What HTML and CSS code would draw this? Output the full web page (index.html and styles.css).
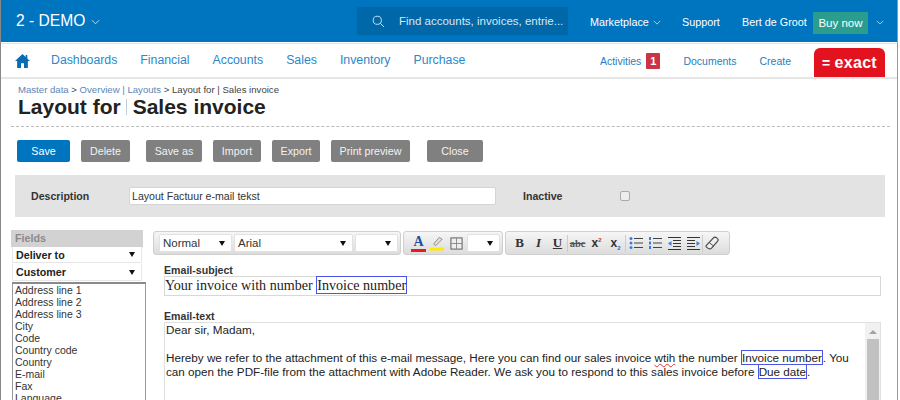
FILE: index.html
```html
<!DOCTYPE html>
<html lang="en">
<head>
<meta charset="utf-8">
<title>Layout for Sales invoice</title>
<link rel="stylesheet" href="styles.css">
</head>
<body>
<div class="app">
  <header class="topbar">
    <div class="org">2 - DEMO <svg class="chev chev-lg" viewBox="0 0 10 6"><path d="M1 1l4 4 4-4"/></svg></div>
    <div class="search">
      <svg class="search-icon" viewBox="0 0 16 16"><circle cx="6.5" cy="6.5" r="5"/><path d="M10.2 10.2l4.6 4.6"/></svg>
      <span>Find accounts, invoices, entrie...</span>
    </div>
    <nav class="top-links">
      <span class="tl-market">Marketplace <svg class="chev" viewBox="0 0 10 6"><path d="M1 1l4 4 4-4"/></svg></span>
      <span class="tl-support">Support</span>
      <span class="tl-user">Bert de Groot</span>
      <span class="buy">Buy now</span>
      <svg class="chev tl-end" viewBox="0 0 10 6"><path d="M1 1l4 4 4-4"/></svg>
    </nav>
  </header>

  <div class="navbar">
    <svg class="home" viewBox="0 0 14 13"><path d="M7 0L0 6.6h2V13h3.6V8.6h2.8V13H12V6.6h2L11.500 4.200V1H10v1.800z"/></svg>
    <nav class="mainnav">
      <a>Dashboards</a><a>Financial</a><a>Accounts</a><a>Sales</a><a>Inventory</a><a>Purchase</a>
    </nav>
    <div class="subnav">
      <a class="activities">Activities <b class="badge">1</b></a>
      <a>Documents</a>
      <a>Create</a>
      <div class="logo"><span class="logo-eq">=</span><span>exact</span></div>
    </div>
  </div>

  <main class="page">
    <div class="crumbs"><a>Master data</a> &gt; <a>Overview | Layouts</a> &gt; Layout for | Sales invoice</div>
    <h1 class="title">Layout for<i class="title-sep"></i>Sales invoice</h1>
    <div class="rule"></div>

    <div class="actions">
      <button class="btn btn-primary w-save">Save</button>
      <button class="btn w-delete">Delete</button>
      <button class="btn w-saveas">Save as</button>
      <button class="btn w-import">Import</button>
      <button class="btn w-export">Export</button>
      <button class="btn w-print">Print preview</button>
      <button class="btn w-close">Close</button>
    </div>

    <section class="descr">
      <label class="descr-label">Description</label>
      <div class="descr-input">Layout Factuur e-mail tekst</div>
      <label class="inactive-label">Inactive</label>
      <span class="check"></span>
    </section>

    <section class="editor-wrap">
      <aside class="fields">
        <div class="fields-head">Fields</div>
        <div class="fsel">Deliver to<i class="arrow"></i></div>
        <div class="fsel fsel-2">Customer<i class="arrow"></i></div>
        <ul class="flist">
          <li>Address line 1</li><li>Address line 2</li><li>Address line 3</li><li>City</li><li>Code</li><li>Country code</li><li>Country</li><li>E-mail</li><li>Fax</li><li>Language</li>
        </ul>
      </aside>

      <div class="editor">
        <div class="toolbar">
          <div class="tgroup tg-1">
            <div class="tsel ts-normal">Normal<i class="arrow"></i></div>
            <div class="tsel ts-font">Arial<i class="arrow"></i></div>
            <div class="tsel ts-size"><i class="arrow"></i></div>
          </div>
          <div class="tgroup tg-2">
            <span class="tcolor">A</span>
            <svg class="ti-mark" viewBox="0 0 16 16"><path d="M5 9l6-7 3 2-7 7z" fill="#e4e0cc" stroke="#8a8a8a"/><rect x="1" y="13" width="15" height="3" fill="#ffea00"/></svg>
            <svg class="ti-table" viewBox="0 0 14 14"><rect x="1" y="1" width="12" height="12" fill="#eee" stroke="#555"/><path d="M7 1v12M1 7h12" stroke="#888"/></svg>
            <div class="tsel ts-4"><i class="arrow"></i></div>
          </div>
          <div class="tgroup tg-3">
            <span class="tb tb-b">B</span><span class="tb tb-i">I</span><span class="tb tb-u">U</span>
            <i class="tsep"></i>
            <span class="tb tb-s">abc</span><span class="tb tb-x">x<sup>2</sup></span><span class="tb tb-x">x<sub>2</sub></span>
            <i class="tsep"></i>
            <svg class="tico" viewBox="0 0 14 14"><g fill="#3b7ddb"><circle cx="2" cy="2.500" r="1.500"/><circle cx="2" cy="7" r="1.500"/><circle cx="2" cy="11.500" r="1.500"/></g><path d="M5 2.500h9M5 7h9M5 11.500h9" stroke="#444"/></svg>
            <svg class="tico" viewBox="0 0 14 14"><g fill="#3b7ddb"><rect x="1" y="1" width="2" height="3"/><rect x="1" y="5.500" width="2" height="3"/><rect x="1" y="10" width="2" height="3"/></g><path d="M5 2.500h9M5 7h9M5 11.500h9" stroke="#444"/></svg>
            <svg class="tico" viewBox="0 0 14 14"><path d="M1 1.500h13M6 4.500h8M6 7.500h8M6 10.500h8M1 13.500h13" stroke="#333"/><path d="M4.500 5L1 7.500 4.500 10z" fill="#3b7ddb"/></svg>
            <svg class="tico" viewBox="0 0 14 14"><path d="M1 1.500h13M1 4.500h8M1 7.500h8M1 10.500h8M1 13.500h13" stroke="#333"/><path d="M10.500 5L14 7.500 10.500 10z" fill="#3b7ddb"/></svg>
            <i class="tsep"></i>
            <svg class="tico ti-erase" viewBox="0 0 16 14"><path d="M1.500 9.500L9 1.500c1-1 2-1 3.500 0s2 2.500 1 3.500L7 12.500c-1 1-2.500 1-4 0s-2.500-2-1.500-3z" fill="#eee" stroke="#444" stroke-width="1.200"/><path d="M4.500 6.500l5 4" stroke="#444"/></svg>
          </div>
        </div>

        <label class="elabel el-subject">Email-subject</label>
        <div class="subject">Your invoice with number <span class="token">Invoice number</span></div>

        <label class="elabel el-text">Email-text</label>
        <div class="body-box">
          <div class="body-text">
            <p>Dear sir, Madam,</p>
            <p>Hereby we refer to the attachment of this e-mail message, Here you can find our sales invoice <span class="typo">wtih</span> the number <span class="token">Invoice number</span>. You can open the PDF-file from the attachment with Adobe Reader. We ask you to respond to this sales invoice before <span class="token">Due date</span>.</p>
          </div>
          <div class="scrollbar"><i class="sb-up"></i><i class="sb-thumb"></i></div>
        </div>
      </div>
    </section>
  </main>
</div>
</body>
</html>
```

FILE: styles.css
```css
* { box-sizing: border-box; }
html, body { margin: 0; padding: 0; background: #fff; }
body { width: 900px; height: 400px; overflow: hidden; font-family: "Liberation Sans", Arial, sans-serif; color: #222; }
.app { width: 898px; height: 400px; overflow: hidden; border-left: 1px solid #888; border-right: 1px solid #999; }

.topbar { height: 42px; background: #0075bf; color: #fff; display: flex; align-items: center; }
.org { width: 356px; padding-left: 15px; font-size: 15.600px; display: flex; align-items: center; gap: 6px; }
.chev { width: 8px; height: 5px; fill: none; stroke: #cfe4f3; stroke-width: 1; }
.chev-lg { width: 9px; height: 6px; margin-top: 2px; }
.search { width: 211px; height: 28px; background: #0067a8; display: flex; align-items: center; padding-left: 15px; font-size: 11.500px; color: #d5e6f3; }
.search-icon { width: 13px; height: 13px; fill: none; stroke: #cfe2f0; stroke-width: 1.200; margin-right: 14px; }
.top-links { flex: 1; display: flex; align-items: center; font-size: 10.800px; padding-left: 22px; margin-top: 2px; }
.tl-market { width: 92px; display: flex; align-items: center; gap: 4px; }
.tl-support { width: 60px; }
.tl-user { width: 71px; }
.buy { width: 55px; height: 22px; line-height: 22px; text-align: center; background: #2a9d8f; font-size: 11.500px; margin-top: 2px; }
.tl-end { margin-left: 8px; }

.navbar { height: 36px; margin-top: 1px; border-top: 1px solid #d8e6f0; border-bottom: 2px solid #e6e6e6; display: flex; align-items: center; padding-left: 14px; }
.home { width: 15px; height: 14px; fill: #0a6cb0; }
.mainnav { display: flex; gap: 23px; margin-left: 21px; margin-bottom: 2px; font-size: 12.300px; color: #2b88c9; }
.subnav { margin-left: auto; display: flex; align-items: center; font-size: 10.500px; color: #2b7dbd; gap: 23px; padding-right: 12px; height: 100%; }
.activities { display: flex; align-items: center; gap: 5px; }
.badge { width: 14px; height: 16px; line-height: 16px; text-align: center; background: #c93545; color: #fff; font-weight: bold; font-size: 11px; border-radius: 1px; }
.logo { width: 71px; height: 29px; align-self: flex-end; background: #e2131f; border-radius: 6px 6px 0 0; color: #fff; font-weight: bold; font-size: 16px; display: flex; align-items: center; justify-content: center; gap: 4px; letter-spacing: .3px; }
.logo-eq { font-size: 14px; }

.crumbs { font-size: 9.600px; line-height: 12px; margin: 5px 0 0 17px; color: #444; }
.crumbs a { color: #5b86b5; }
.title { margin: 0 0 0 17px; font-size: 21px; line-height: 22px; font-weight: bold; color: #222; display: flex; align-items: center; }
.title-sep { width: 1px; height: 16px; background: #c3d0dc; margin: 0 6px 0 5px; }
.rule { margin: 8px 7px 0 10px; border-top: 1px dashed #bbb; }

.actions { display: flex; margin: 13px 0 0 16px; height: 22px; }
.btn { height: 22px; border: 0; border-radius: 2px; background: #808080; color: #f2f2f2; font: 10.700px "Liberation Sans", Arial, sans-serif; padding: 0; }
.btn-primary { background: #0075bf; color: #fff; }
.w-save { width: 53px; margin-right: 11px; }
.w-delete { width: 49px; margin-right: 16px; }
.w-saveas { width: 56px; margin-right: 11px; }
.w-import { width: 48px; margin-right: 11px; }
.w-export { width: 48px; margin-right: 11px; }
.w-print { width: 79px; margin-right: 17px; }
.w-close { width: 56px; }

.descr { margin: 13px 0 0 14px; width: 870px; height: 42px; background: #e3e3e3; display: flex; align-items: center; font-size: 10.600px; }
.descr-label { width: 114px; padding-left: 16px; font-weight: bold; color: #333; }
.descr-input { width: 367px; height: 18px; line-height: 16px; padding-left: 2px; background: #fff; border: 1px solid #d5d5d5; border-radius: 2px; color: #333; }
.inactive-label { margin-left: 27px; width: 97px; font-weight: bold; color: #333; }
.check { width: 10px; height: 10px; background: #eee; border: 1px solid #aaa; border-radius: 2px; }

.editor-wrap { display: flex; margin: 13px 0 0 10px; align-items: flex-start; }
.fields { width: 135px; font-size: 10.700px; }
.fields-head { width: 132px; height: 17px; line-height: 17px; background: #d2d2d2; padding-left: 4px; font-weight: bold; color: #8a8a8a; }
.fsel { width: 130px; height: 16px; margin-left: 1px; padding-left: 3px; background: #fff; font-weight: bold; color: #222; display: flex; align-items: center; border: 1px solid #e6e6e6; border-top: 0; }
.fsel-2 { margin-top: 1px; height: 17px; }
.arrow { width: 0; height: 0; border-left: 3px solid transparent; border-right: 3px solid transparent; border-top: 5px solid #111; margin-left: auto; margin-right: 6px; }
.flist { list-style: none; margin: 1px 0 0 1px; padding: 0 0 0 2px; width: 134px; height: 130px; border: 1px solid #999; border-top: 2px solid #8a8a8a; font-size: 10.500px; line-height: 12px; color: #333; overflow: hidden; }

.editor { margin-left: 7px; width: 728px; }
.toolbar { display: flex; gap: 2px; margin-top: 1px; height: 24px; }
.tgroup { height: 24px; background: linear-gradient(#f6f6f6, #dcdcdc); border: 1px solid #cfcfcf; border-radius: 3px; display: flex; align-items: center; }
.tg-1 { width: 248px; padding-left: 5px; gap: 2px; }
.tg-2 { width: 100px; padding-left: 7px; }
.tg-3 { width: 225px; padding-left: 4px; }
.tsel { height: 18px; background: #fff; border: 1px solid #e2e2e2; border-radius: 2px; display: flex; align-items: center; padding-left: 3px; font-size: 11.500px; color: #333; }
.ts-normal { width: 73px; }
.ts-font { width: 119px; }
.ts-size { width: 43px; }
.ts-4 { width: 33px; margin-left: 4px; }
.tcolor { width: 15px; height: 17px; text-align: center; color: #1d4f9e; font: bold 14px/14px "Liberation Serif", serif; border-bottom: 3px solid #e51c23; }
.ti-mark { margin-left: 3px; width: 15px; height: 16px; flex: none; }
.ti-table { margin-left: 6px; width: 13px; height: 13px; flex: none; }
.tico { width: 14px; height: 14px; margin: 0 2.500px; flex: none; }
.tb { width: 19px; text-align: center; font-size: 13px; font-weight: bold; color: #333; font-family: "Liberation Serif", serif; }
.tb-i { font-style: italic; }
.tb-u { text-decoration: underline; }
.tb-s { font-size: 10.500px; text-decoration: line-through; color: #555; }
.tb-x { font-family: "Liberation Sans", sans-serif; font-size: 12px; line-height: 14px; }
.tb-x sup, .tb-x sub { font-size: 6px; line-height: 0; color: #c33; }
.tb-x sub { color: #36c; }
.tsep { width: 1px; height: 17px; background: #ccc; flex: none; }
.ti-erase { width: 15px; margin: 0 2px; }

.elabel { display: block; margin-left: 11px; font-size: 10.600px; font-weight: bold; color: #333; line-height: 12px; }
.el-subject { margin-top: 9px; }
.subject { margin-left: 11px; width: 717px; height: 20px; border: 1px solid #d8d8d8; font: 14.100px/17px "Liberation Serif", serif; color: #222; padding-left: 0; }
.token { border: 1px solid #4a55e8; }
.el-text { margin-top: 14px; }
.body-box { margin-left: 11px; width: 717px; height: 90px; border: 1px solid #e0e0e0; display: flex; }
.body-text { flex: 1; font-size: 11.700px; line-height: 14px; color: #222; padding: 0 0 0 1px; }
.body-text p { margin: 0 0 14px; }
.typo { text-decoration: underline wavy #e03030 1px; }
.scrollbar { width: 15px; padding: 0 1px; background: #f1f1f1; display: flex; flex-direction: column; align-items: center; }
.sb-up { width: 0; height: 0; margin: 7px 0 5px; border-left: 4px solid transparent; border-right: 4px solid transparent; border-bottom: 4px solid #a3a3a3; }
.sb-thumb { width: 12px; flex: 1; background: #c1c1c1; }
```
